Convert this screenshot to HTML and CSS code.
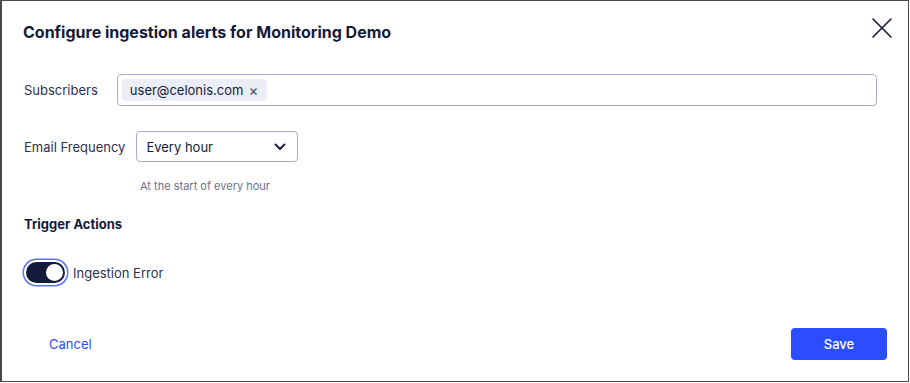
FILE: index.html
```html
<html>
  <head>
    <link rel="stylesheet" href="styles.css">
  </head>
  <body>
    <div class="dialog">
      <div class="dialog-header">
        <h2>Configure ingestion alerts for Monitoring Demo</h2>
        <button class="close" title="Close">
          <svg width="22" height="22" viewBox="0 0 22 22" fill="none" stroke="#141a3a" stroke-width="1.6" stroke-linecap="round">
            <line x1="2" y1="2" x2="20" y2="20"></line>
            <line x1="20" y1="2" x2="2" y2="20"></line>
          </svg>
        </button>
      </div>

      <div class="dialog-body">
        <div class="field field-subscribers">
          <label>Subscribers</label>
          <div class="tag-input">
            <span class="chip">user@celonis.com <span class="chip-remove">&times;</span></span>
          </div>
        </div>

        <div class="field field-frequency">
          <label>Email Frequency</label>
          <div class="select">
            <span>Every hour</span>
            <svg width="12" height="8" viewBox="0 0 12 8" fill="none" stroke="#141a3a" stroke-width="1.8" stroke-linecap="round" stroke-linejoin="round">
              <polyline points="1.5 1.5 6 6 10.5 1.5"></polyline>
            </svg>
          </div>
        </div>
        <div class="hint">At the start of every hour</div>

        <h3>Trigger Actions</h3>

        <div class="toggle-row">
          <span class="toggle"><span class="knob"></span></span>
          <span>Ingestion Error</span>
        </div>
      </div>

      <div class="dialog-footer">
        <button class="link">Cancel</button>
        <button class="primary">Save</button>
      </div>
    </div>
  </body>
</html>
```

FILE: styles.css
```css
body,
html {
  font-family: Inter, "Noto Sans", sans-serif;
  font-size: 13px;
  color: #2c3150;
  padding: 0;
  margin: 0;
  background: #fff;
}

*,
*:before,
*:after {
  box-sizing: border-box;
}

:root {
  --navy: #141a3a;
  --blue: #2b4cff;
  --line: #a9abc8;
}

button {
  font-family: inherit;
  cursor: pointer;
  border: 0;
  background: none;
  margin: 0;
  padding: 0;
}

.dialog {
  width: 909px;
  height: 382px;
  border: 1px solid #4a4a4a;
  border-left-width: 2px;
  display: flex;
  flex-direction: column;
}

.dialog-header {
  display: flex;
  justify-content: space-between;
  align-items: flex-start;
  padding: 16px 15px 0 21px;
}

.dialog-header h2 {
  margin: 5px 0 0;
  font-size: 16px;
  line-height: 20px;
  font-weight: 700;
  color: var(--navy);
}

.close {
  width: 22px;
  height: 22px;
  display: flex;
}

.dialog-body {
  padding: 32px 31px 0 22px;
  flex: 1;
}

.field {
  display: flex;
  align-items: center;
}

.field label {
  color: #2c3150;
}

.field-subscribers label {
  margin-right: 19px;
}

.field-frequency {
  margin-top: 25px;
}

.field-frequency label {
  margin-right: 11px;
}

.tag-input {
  flex: 1;
  height: 32px;
  border: 1px solid var(--line);
  border-radius: 4px;
  padding: 4px;
  display: flex;
  align-items: center;
}

.chip {
  height: 22px;
  background: #eceef5;
  border-radius: 4px;
  padding: 0 9px 0 8px;
  display: flex;
  align-items: center;
  color: var(--navy);
}

.chip-remove {
  margin-left: 5px;
  font-size: 15px;
  color: #4a4f6a;
}

.select {
  width: 162px;
  height: 31px;
  border: 1px solid var(--line);
  border-radius: 4px;
  padding: 0 11px 0 9px;
  display: flex;
  align-items: center;
  justify-content: space-between;
  color: var(--navy);
}

.hint {
  margin: 17px 0 0 116px;
  font-size: 11px;
  color: #6c7090;
}

h3 {
  margin: 23px 0 0;
  font-size: 13px;
  font-weight: 700;
  color: var(--navy);
}

.toggle-row {
  margin-top: 28px;
  display: flex;
  align-items: center;
  gap: 6px;
}

.toggle {
  width: 43px;
  height: 25px;
  border-radius: 13px;
  background: var(--navy);
  border: 2px solid #fff;
  box-shadow: 0 0 0 1.5px #5a74ff;
  display: flex;
  align-items: center;
  justify-content: flex-end;
  padding: 0 2px;
}

.knob {
  width: 17px;
  height: 17px;
  border-radius: 50%;
  background: #fff;
}

.dialog-footer {
  display: flex;
  justify-content: space-between;
  align-items: center;
  padding: 0 21px 21px 26px;
}

.link {
  color: var(--blue);
  font-size: 13px;
  padding: 8px 21px;
}

.primary {
  width: 96px;
  height: 32px;
  border-radius: 4px;
  background: var(--blue);
  color: #fff;
  font-size: 13px;
  font-weight: 500;
}
```
